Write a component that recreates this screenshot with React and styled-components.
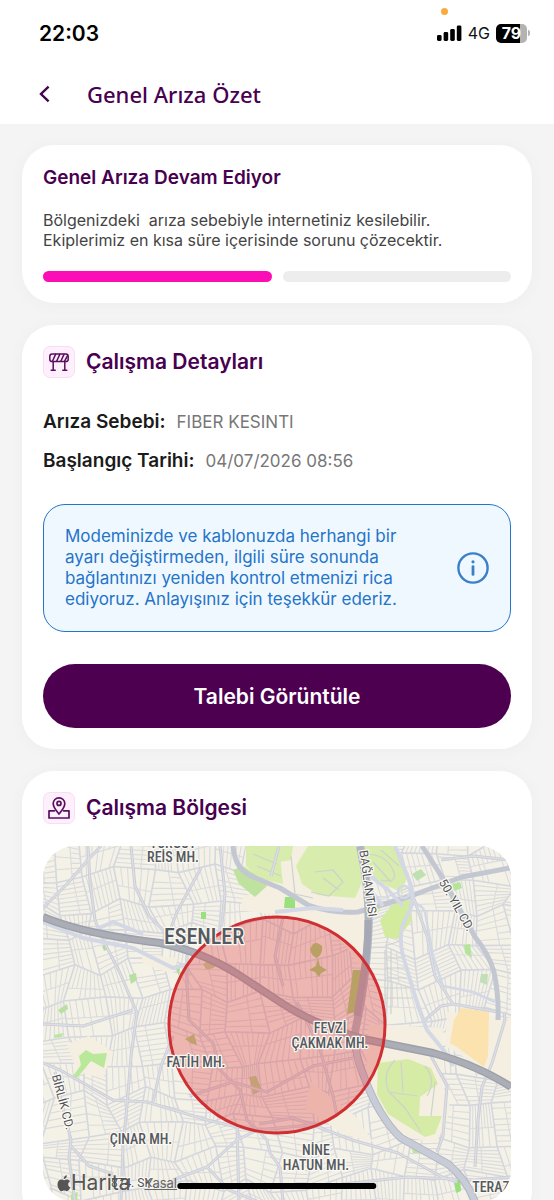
import React from 'react';
import styled, { createGlobalStyle } from 'styled-components';

const GlobalStyle = createGlobalStyle`
  * {
    box-sizing: border-box;
  }

  body {
    margin: 0;
    background: #f4f4f4;
    font-family: Inter, "Liberation Sans", sans-serif;
  }
`;

/* ---------- icons ---------- */

const BackIcon = () => (
  <svg width="12" height="18" viewBox="0 0 12 18" fill="none" stroke="#480050" strokeWidth="2.4">
    <path d="M9.6 1.6 2 9l7.6 7.4" />
  </svg>
);

const BarrierIcon = () => (
  <svg width="22" height="22" viewBox="0 0 22 22" fill="none" stroke="#5a0f5e" strokeWidth="1.5" strokeLinecap="round" strokeLinejoin="round">
    <rect x="1.8" y="3" width="18.4" height="7.6" rx="2.4" />
    <path d="M4.4 10.2 7.6 3.4M8.6 10.2l3.2-6.8M12.8 10.2 16 3.4M16.6 10.2l2.8-5.4" />
    <path d="M5.2 10.8v8.4M16.8 10.8v8.4M3.2 19.2h4M14.8 19.2h4" />
  </svg>
);

const RegionIcon = () => (
  <svg width="24" height="24" viewBox="0 0 24 24" fill="none" stroke="#5a0f5e" strokeWidth="1.7" strokeLinecap="round" strokeLinejoin="round">
    <path d="M12 18C8.4 14 6.2 11 6.2 7.6a5.8 5.8 0 0 1 11.600 0c0 3.400-2.200 6.400-5.800 10.400z" />
    <circle cx="12" cy="7.4" r="2" />
    <path d="M7.400 14.800H2V22h20v-7.200h-5.400" />
  </svg>
);

const InfoIcon = () => (
  <svg width="32" height="32" viewBox="0 0 32 32" fill="none" stroke="#3a80c9" strokeLinecap="round">
    <circle cx="16" cy="16" r="14.6" strokeWidth="2.4" />
    <path d="M16 14.6v7.800" strokeWidth="2.800" />
    <circle cx="16" cy="9.8" r="1.6" fill="#3a80c9" stroke="none" />
  </svg>
);

const SignalIcon = () => (
  <svg width="25" height="16" viewBox="0 0 25 16" fill="#000">
    <rect x="0" y="10" width="4.6" height="6" rx="1.4" />
    <rect x="6.6" y="7" width="4.6" height="9" rx="1.4" />
    <rect x="13.2" y="4" width="4.6" height="12" rx="1.4" />
    <rect x="19.8" y="0.5" width="4.6" height="15.5" rx="1.4" />
  </svg>
);

const AppleIcon = () => (
  <svg width="14" height="17" viewBox="0 0 14 17" fill="#555">
    <path d="M9.800.3c.1 1.200-.3 2.100-.9 2.800-.6.700-1.300 1.100-2.200 1-.1-1.100.3-2 .9-2.700C8.200.8 9 .3 9.800.3z" />
    <path d="M13.300 12.300c-.7 1.900-2 3.900-3.500 3.900-.9 0-1.400-.6-2.500-.6s-1.700.6-2.500.6C2.700 16.200.5 12.600.5 9.400c0-3 1.900-4.800 3.900-4.800 1.100 0 1.900.7 2.700.7.800 0 1.700-.7 3-.7 1.200 0 2.300.6 2.900 1.600-2.600 1.400-2.200 5.200.3 6.100z" />
  </svg>
);

/* ---------- map ---------- */

const MAP_W = 468;
const MAP_H = 356;
const CELL = 32;

const noise = (a, b, seed) => {
  const v = Math.sin(a * 127.1 + b * 311.7 + seed * 74.7) * 43758.5453;
  return v - Math.floor(v);
};

const corner = (c, r) => [
  c * CELL + (noise(c, r, 1) - 0.5) * 20 + r * 3 - 20,
  r * CELL + (noise(c, r, 2) - 0.5) * 20 - c * 2,
];

const mix = (p, q, t) => [p[0] + (q[0] - p[0]) * t, p[1] + (q[1] - p[1]) * t];
const seg = (p, q) =>
  `M${p[0].toFixed(1)} ${p[1].toFixed(1)}L${q[0].toFixed(1)} ${q[1].toFixed(1)}`;

// every block is a crooked quad filled with side streets
const buildStreets = () => {
  let side = '';
  let main = '';
  for (let r = -1; r < 14; r += 1) {
    for (let c = -2; c < 17; c += 1) {
      const [a, b, d, e] = [corner(c, r), corner(c + 1, r), corner(c + 1, r + 1), corner(c, r + 1)];
      const flip = noise(c, r, 3) > 0.5;
      const [p, q, s, t] = flip ? [a, b, d, e] : [b, d, e, a];
      const n = 6 + Math.floor(noise(c, r, 4) * 3);
      const split = 0.35 + noise(c, r, 5) * 0.3;
      for (let i = 1; i < n; i += 1) {
        const from = mix(p, q, i / n);
        const to = mix(t, s, i / n);
        side += noise(i, c, r) > 0.75 ? seg(from, mix(from, to, split)) : seg(from, to);
      }
      side += seg(mix(p, t, split), mix(q, s, split));
      main += seg(a, b) + seg(a, e);
    }
  }
  return { side, main };
};

const streets = buildStreets();

const openLand = [
  'M203 0H318L325 86 318 122C300 90 275 75 240 70L197 64 200 50 215 46 200 22Z',
  'M244 62L318 70 316 118C300 88 275 74 244 70Z',
  'M24 198L46 190 70 206 60 232 34 226Z',
  'M326 178L400 182 398 235 408 264 394 296 350 290 322 242Z',
  'M98 108L135 112 130 128 100 118Z',
  'M404 166L468 172V236L440 222 402 200Z',
  'M268 236L312 270 330 296 300 288 262 262Z',
];

const parks = [
  { d: 'M203 0H236L240 38 216 32 203 20Z', fill: '#d8ecad' },
  { d: 'M265 0H313L320 34 312 52 275 49 259 38 253 20Z', fill: '#d8ecad' },
  { d: 'M232 0H250L248 14 236 16Z', fill: '#d8ecad' },
  { d: 'M320 0H350L366 28 358 46 336 36 324 20Z', fill: '#d8ecad' },
  { d: 'M342 91L337 74 352 56 366 54 369 74 355 93Z', fill: '#d2eb9c' },
  { d: 'M326 56L340 58 334 70 328 68Z', fill: '#d8ecad' },
  { d: 'M190 24L200 20 212 28 224 40 212 51 196 38Z', fill: '#bfe39f' },
  { d: 'M335 217L365 213 388 222 395 238 377 251 376 270 399 270 392 288 382 291 345 268 334 248Z', fill: '#d6eba6' },
  { d: 'M242 51H252V62H241Z', fill: '#9ae07c' },
  { d: 'M158 66H163V73H158Z', fill: '#9ae07c' },
  { d: 'M59 100L64 97 65 103 61 105Z', fill: '#b6dba0' },
  { d: 'M86 129L93 127 94 134 88 138Z', fill: '#b9e0a2' },
  { d: 'M15 164L24 158 25 163 18 168Z', fill: '#b9e0a2' },
  { d: 'M132 120L137 121 136 130Z', fill: '#a8df8e' },
  { d: 'M369 28L378 23 383 29 374 35Z', fill: '#bfe0b0' },
  { d: 'M409 38L417 36 419 42 411 45Z', fill: '#b4e59a' },
  { d: 'M421 99L427 98 429 112 422 107Z', fill: '#b4e59a' },
  { d: 'M438 128L445 128 444 139 437 136Z', fill: '#c2e0b8' },
  { d: 'M36 210L43 204 50 208 64 207 61 222 48 215 34 232 30 230 38 219Z', fill: '#b9e89b' },
  { d: 'M11 189L20 187 19 191 12 192Z', fill: '#b9e89b' },
  { d: 'M411 335L417 333 418 345 413 347Z', fill: '#9ae07c' },
  { d: 'M369 303L380 304 379 307 370 307Z', fill: '#b9e89b' },
  { d: 'M28 348L35 346 34 354 28 356Z', fill: '#b9e89b' },
  { d: 'M310 124H319L313 166 304 168Z', fill: '#a5cf72' },
  { d: 'M270 98Q274 95 279 100Q280 108 274 112Q268 110 267 103Z', fill: '#a5cf72' },
  { d: 'M275 112L277 120 284 124 278 127 276 131 272 126 266 124 273 120Z', fill: '#a5cf72' },
  { d: 'M142 193L151 188 154 199 148 197Z', fill: '#b1d080' },
  { d: 'M206 231L213 230 219 244 210 249Z', fill: '#b8cf90' },
  { d: 'M160 118Q168 112 174 117Q172 124 163 123Z', fill: '#c3cf95' },
  { d: 'M418 162L446 166 445 210 441 221 414 201 407 197 411 174Z', fill: '#fbe2ae' },
];

const avenues = [
  'M45 0L47 37 52 74 60 94 77 127 94 167 88 210 84 260 80 300 78 356',
  'M0 62L24 38 45 14 58 0',
  'M88 0L92 40 106 70 124 88',
  'M158 22L147 42 134 66 124 92',
  'M177 0L182 48 178 86',
  'M0 217L17 224 70 254 104 256 164 274 194 281 214 284',
  'M144 88L144 140 146 174 170 197 177 224 197 244 204 274 224 294 227 307 237 321 240 356',
  'M130 334L164 321 194 294 214 284 278 278',
  'M12 226L20 262 28 294 26 312 32 356M28 300L46 320 70 328',
  'M110 256L118 220 130 190',
  'M275 281L309 294 355 307 399 331 414 336',
  'M216 278L250 272 275 281',
  'M432 321L435 274 439 241 449 217 462 174 461 166',
  'M300 338L365 331 432 334 468 331',
  'M240 71L232 110 240 140',
  'M398 14L430 10 468 14',
  'M370 50L384 90 392 130 410 158 455 166',
  'M382 174L398 160 410 158',
  'M388 210L404 240 400 290 394 306',
  'M254 156L276 200 290 250 294 270',
  'M146 250L190 236 224 246 270 220 310 212',
  'M228 30L236 0',
  'M194 281L196 356',
  'M164 321L186 344 216 356',
  'M0 178L40 180 90 164',
];

const MapDrawing = () => (
  <MapSvg viewBox={`0 0 ${MAP_W} ${MAP_H}`} preserveAspectRatio="xMidYMid slice" aria-label="Çalışma bölgesi haritası">
    <rect width={MAP_W} height={MAP_H} fill="#f4f1e6" />
    <g fill="none">
      <path d={streets.side} strokeWidth="1.1" stroke="#dbdbde" />
      <path d={streets.main} strokeWidth="1.6" stroke="#d5d7de" />
    </g>
    {openLand.map((d) => <path key={d} d={d} fill="#f4efe0" />)}
    {parks.map((p) => <path key={p.d} d={p.d} fill={p.fill} />)}
    <g fill="none" stroke="#cdd2cf" strokeWidth="1.2">
      <path d="M248 10L252 48 270 52M272 26L290 24 300 36 286 50 268 46M280 32L296 44M210 8L234 18M214 20L238 30" />
      <path d="M326 8Q344 10 350 24T338 34M330 16L348 36M338 4L356 20" />
      <path d="M352 214Q338 228 346 246L362 262 378 286M346 246L374 250M358 216L360 246M382 220Q394 234 384 250M392 236L388 270" />
      <path d="M342 100L360 94M342 104V170M348 104V168M342 112H360M342 122H362M342 132H364M342 142H366M342 152H370" />
    </g>
    <g fill="none" strokeLinejoin="round">
      {avenues.map((d) => <path key={d} d={d} stroke="#cbccd4" strokeWidth="3" />)}
      {avenues.map((d) => <path key={d} d={d} stroke="#dcdee6" strokeWidth="1.4" />)}
      <g stroke="#c3c7d1" strokeWidth="5">
        <path d="M190 0Q192 24 210 31L237 42 265 59Q290 68 315 66L365 51 419 31 467 22" />
        <path d="M379 0L399 31 432 91Q446 108 451 126Q456 150 455 174" />
      </g>
      <g stroke="#d3d8e4" strokeWidth="4">
        <path d="M352 0L366 34Q374 54 364 70Q354 86 360 110L375 160 384 184 402 206 410 220" />
        <path d="M320 24L345 44 360 60M324 40L340 60M232 66L270 62 300 64" />
        <path d="M0 76L40 92 90 102 130 122 146 118M56 82L70 76 100 88" />
        <circle cx="361" cy="46" r="6" strokeWidth="2.5" />
        <path d="M366 60Q376 54 382 66L390 110 400 140 430 146 452 156" strokeWidth="2.5" />
      </g>
      <path d="M317 0Q328 50 325 94Q322 140 314 176Q308 198 320 228Q336 272 358 292L405 318Q424 334 432 356" stroke="#b2b6c1" strokeWidth="8" />
      <path d="M317 190Q308 200 320 228Q336 272 358 292L405 318Q424 334 432 356" stroke="#c8ccd7" strokeWidth="6" />
      <path d="M325 74Q325 100 321 126L314 170" stroke="#a6a9b5" strokeWidth="7" />
      <path d="M0 71Q40 88 117 97Q160 106 196 129L237 156Q270 178 320 193L390 207Q436 220 468 241" stroke="#9da0a9" strokeWidth="8" />
      <path d="M0 71Q40 88 117 97Q160 106 196 129L237 156Q270 178 320 193L390 207Q436 220 468 241" stroke="#abaeb7" strokeWidth="5" />
    </g>
    <circle cx="234" cy="179" r="108" fill="#e0474a" fillOpacity="0.35" stroke="#cf2e33" strokeWidth="3" />
    <g fill="#555960" stroke="#fbf9f3" strokeWidth="2.5" paintOrder="stroke" strokeLinejoin="round" fontSize="14" fontWeight="500" textAnchor="middle">
      <text x="130" y="2">TURGUT</text>
      <text x="130" y="16">REİS MH.</text>
      <text x="161" y="98" fontSize="22">ESENLER</text>
      <text x="287" y="187">FEVZİ</text>
      <text x="287" y="202">ÇAKMAK MH.</text>
      <text x="153" y="221">FATİH MH.</text>
      <text x="98" y="298">ÇINAR MH.</text>
      <text x="273" y="309">NİNE</text>
      <text x="273" y="324">HATUN MH.</text>
      <text x="448" y="346">TERAZ</text>
    </g>
    <RoadNames fill="#50535a" stroke="#fbf9f3" strokeWidth="2.5" paintOrder="stroke" strokeLinejoin="round" fontSize="12" textAnchor="middle">
      <text transform="translate(321 38) rotate(82)">BAĞLANTISI</text>
      <text transform="translate(410 61) rotate(60)">50. YIL CD.</text>
      <text transform="translate(16 257) rotate(75)">BİRLİK CD.</text>
      <text x="90" y="341">874. SK.</text>
    </RoadNames>
  </MapSvg>
);

/* ---------- page ---------- */

const App = () => (
  <Screen>
    <GlobalStyle />
    <StatusBar>
      <Clock>22:03</Clock>
      <StatusIcons>
        <MicDot />
        <SignalIcon />
        <Network>4G</Network>
        <Battery><BatteryBody>79</BatteryBody><BatteryTip /></Battery>
      </StatusIcons>
    </StatusBar>
    <Header>
      <BackButton type="button" aria-label="Geri"><BackIcon /></BackButton>
      <PageTitle>Genel Arıza Özet</PageTitle>
    </Header>
    <Content>
      <Card>
        <StatusTitle>Genel Arıza Devam Ediyor</StatusTitle>
        <StatusText>
          {'Bölgenizdeki  arıza sebebiyle internetiniz kesilebilir.\nEkiplerimiz en kısa süre içerisinde sorunu çözecektir.'}
        </StatusText>
        <Steps>
          <Step $active />
          <Step />
        </Steps>
      </Card>

      <Card>
        <CardHead>
          <IconBox><BarrierIcon /></IconBox>
          <CardTitle>Çalışma Detayları</CardTitle>
        </CardHead>
        <Details>
          <DetailRow>
            <dt>Arıza Sebebi:</dt>
            <dd>FIBER KESINTI</dd>
          </DetailRow>
          <DetailRow>
            <dt>Başlangıç Tarihi:</dt>
            <dd>04/07/2026 08:56</dd>
          </DetailRow>
        </Details>
        <InfoBox>
          <InfoText>
            Modeminizde ve kablonuzda herhangi bir ayarı değiştirmeden, ilgili süre sonunda
            bağlantınızı yeniden kontrol etmenizi rica ediyoruz. Anlayışınız için teşekkür ederiz.
          </InfoText>
          <InfoIcon />
        </InfoBox>
        <PrimaryButton type="button">Talebi Görüntüle</PrimaryButton>
      </Card>

      <Card>
        <CardHead>
          <IconBox><RegionIcon /></IconBox>
          <CardTitle>Çalışma Bölgesi</CardTitle>
        </CardHead>
        <MapFrame>
          <MapDrawing />
          <MapCredit>
            <AppleIcon />
            <span>Harita</span>
            <a href="#yasal">Yasal</a>
          </MapCredit>
        </MapFrame>
      </Card>
    </Content>
    <HomeIndicator />
  </Screen>
);

const Screen = styled.div`
  position: relative;
  display: flex;
  flex-direction: column;
  height: 100vh;
  overflow: hidden;
  background: #f4f4f4;
`;

const StatusBar = styled.div`
  display: flex;
  flex-shrink: 0;
  align-items: center;
  justify-content: space-between;
  height: 66px;
  padding: 0 24px 0 39px;
  background: #fff;
`;

const Clock = styled.span`
  font-size: 21px;
  font-weight: 600;
  color: #000;
`;

const StatusIcons = styled.div`
  position: relative;
  display: flex;
  align-items: center;
  gap: 6px;
`;

const MicDot = styled.i`
  position: absolute;
  top: -15px;
  left: 4px;
  width: 7px;
  height: 7px;
  border-radius: 50%;
  background: #fbaa3f;
`;

const Network = styled.span`
  font-size: 16px;
  color: #111;
`;

const Battery = styled.div`
  display: flex;
  align-items: center;
  gap: 1px;
`;

const BatteryBody = styled.span`
  width: 31px;
  height: 19px;
  border-radius: 5px;
  background: linear-gradient(to right, #000 79%, #b3b3b3 79%);
  font-size: 16px;
  font-weight: 700;
  line-height: 19px;
  text-align: center;
  color: #fff;
`;

const BatteryTip = styled.i`
  width: 2px;
  height: 6px;
  border-radius: 0 2px 2px 0;
  background: #b3b3b3;
`;

const Header = styled.header`
  display: flex;
  flex-shrink: 0;
  align-items: center;
  gap: 27px;
  height: 58px;
  padding: 0 30px 3px;
  background: #fff;
`;

const BackButton = styled.button`
  display: flex;
  align-items: center;
  justify-content: center;
  width: 30px;
  height: 30px;
  padding: 0;
  border: 0;
  background: none;
  cursor: pointer;
`;

const PageTitle = styled.h1`
  margin: 0;
  font-family: "Noto Sans", "Open Sans", sans-serif;
  font-size: 22px;
  font-weight: 500;
  line-height: 30px;
  color: #480050;
`;

const Content = styled.main`
  display: flex;
  flex: 1;
  flex-direction: column;
  gap: 22px;
  min-height: 0;
  padding: 21px 22px;
  overflow-y: auto;
  scrollbar-width: none;
`;

const Card = styled.section`
  flex-shrink: 0;
  padding: 21px;
  border-radius: 32px;
  background: #fff;
  box-shadow: 0 2px 18px rgba(0, 0, 0, .03);
`;

const StatusTitle = styled.h2`
  margin: 0 0 20px;
  font-size: 19px;
  font-weight: 600;
  line-height: 24px;
  color: #480050;
`;

const StatusText = styled.p`
  margin: 0;
  font-size: 16px;
  line-height: 20px;
  white-space: pre-wrap;
  color: #444;
`;

const Steps = styled.div`
  display: flex;
  gap: 11px;
  margin-top: 21px;
`;

const Step = styled.div`
  flex: 1;
  height: 11px;
  border-radius: 6px;
  background: ${(props) => (props.$active ? '#fc0eb6' : '#ededed')};
`;

const CardHead = styled.div`
  display: flex;
  align-items: center;
  gap: 11px;
`;

const IconBox = styled.div`
  display: flex;
  align-items: center;
  justify-content: center;
  width: 32px;
  height: 32px;
  border: 1px solid #fbdcf5;
  border-radius: 7px;
  background: #fdeffb;
`;

const CardTitle = styled.h2`
  margin: 0;
  font-size: 21px;
  font-weight: 600;
  line-height: 32px;
  color: #480050;
`;

const Details = styled.dl`
  display: flex;
  flex-direction: column;
  gap: 15px;
  margin: 32px 0 31px;
`;

const DetailRow = styled.div`
  display: flex;
  align-items: center;
  gap: 11px;
  line-height: 24px;

  dt {
    font-size: 19px;
    font-weight: 600;
    color: #1b1b1b;
  }

  dd {
    margin: 0;
    font-size: 17px;
    color: #777;
  }
`;

const InfoBox = styled.div`
  display: flex;
  align-items: center;
  justify-content: space-between;
  gap: 40px;
  padding: 21px;
  border: 1px solid #2474c8;
  border-radius: 22px;
  background: #f0f8ff;

  svg {
    flex-shrink: 0;
  }
`;

const InfoText = styled.p`
  margin: 0;
  font-size: 17px;
  line-height: 21px;
  color: #2474c8;
`;

const PrimaryButton = styled.button`
  display: block;
  width: 100%;
  height: 64px;
  margin-top: 32px;
  border: 0;
  border-radius: 32px;
  background: #4d0050;
  font-family: inherit;
  font-size: 21px;
  font-weight: 600;
  color: #fff;
  cursor: pointer;
`;

const MapFrame = styled.div`
  position: relative;
  margin-top: 22px;
  border-radius: 32px;
  overflow: hidden;
`;

const MapSvg = styled.svg`
  display: block;
  width: 100%;
  font-family: "Roboto Condensed", "Liberation Sans Narrow", Roboto, sans-serif;
`;

const RoadNames = styled.g`
  font-family: Roboto, "Liberation Sans", sans-serif;
`;

const MapCredit = styled.div`
  position: absolute;
  bottom: 7px;
  left: 14px;
  display: flex;
  align-items: center;
  font-size: 21px;
  line-height: 24px;
  color: #555;

  a {
    margin-left: 14px;
    font-size: 13px;
    color: #666;
  }
`;

const HomeIndicator = styled.div`
  position: absolute;
  bottom: 11px;
  left: 50%;
  width: 36%;
  height: 6px;
  border-radius: 3px;
  background: #000;
  transform: translateX(-50%);
`;

export default App;
